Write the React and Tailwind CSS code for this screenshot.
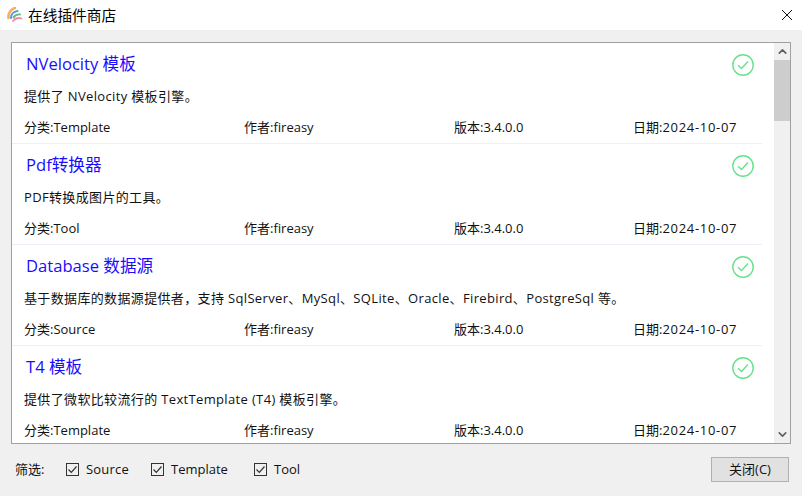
import { ChevronUp, ChevronDown } from 'lucide-react';

const plugins = [
  { name: 'NVelocity 模板', desc: '提供了 NVelocity 模板引擎。', category: 'Template' },
  { name: 'Pdf转换器', desc: 'PDF转换成图片的工具。', category: 'Tool' },
  { name: 'Database 数据源', desc: '基于数据库的数据源提供者，支持 SqlServer、MySql、SQLite、Oracle、Firebird、PostgreSql 等。', category: 'Source' },
  { name: 'T4 模板', desc: '提供了微软比较流行的 TextTemplate (T4) 模板引擎。', category: 'Template' },
];

function Logo() {
  return (
    <svg width="16" height="16" viewBox="0 0 16 16" fill="none">
      <path d="M1.500 11C1 6 4 2 8 1" stroke="#f7b05c" strokeWidth="2.600" strokeLinecap="round" />
      <path d="M4 11C4 7.500 6.500 4.500 10.500 4" stroke="#5a9ae0" strokeWidth="2.200" strokeLinecap="round" />
      <path d="M6.500 10.500C7.500 8.500 10 7.300 13 7.500" stroke="#5dbb78" strokeWidth="1.800" strokeLinecap="round" />
      <path d="M6 14C8 11.500 11.500 10.500 14.500 11.500" stroke="#ee8ea0" strokeWidth="1.800" strokeLinecap="round" />
    </svg>
  );
}

function StatusIcon() {
  return (
    <svg width="22" height="22" viewBox="0 0 22 22" fill="none" className="mt-[2px]">
      <circle cx="11" cy="11" r="10.200" stroke="#66e38a" strokeWidth="1.400" />
      <path d="M6 11.300L9.500 14.500L16 7.500" stroke="#66e38a" strokeWidth="1.400" />
    </svg>
  );
}

function CheckMark() {
  return (
    <svg width="11" height="11" viewBox="0 0 11 11" fill="none">
      <path d="M1.500 5.500L4.300 8.300L9.500 2.500" stroke="#333333" strokeWidth="1.200" />
    </svg>
  );
}

function PluginRow({ plugin }) {
  return (
    <div className="h-[101px] shrink-0 border-b border-[#eeeefa] pl-3 pr-2 flex flex-col">
      <div className="flex justify-between h-[44px] pt-[9px] pl-[2px]">
        <span className="text-[16.6px] leading-[24px] text-[#1a0dff]">{plugin.name}</span>
        <StatusIcon />
      </div>
      <div className="text-[13px] leading-[18px] h-[31px] tracking-[0.35px] text-[#111111]">{plugin.desc}</div>
      <div className="grid grid-cols-[220px_210px_179px_1fr] text-[13px] leading-[18px] text-[#111111]">
        <span>分类:{plugin.category}</span>
        <span>作者:fireasy</span>
        <span>版本:3.4.0.0</span>
        <span>日期:<span className="tracking-[0.7px]">2024-10-07</span></span>
      </div>
    </div>
  );
}

function Filter({ label, className }) {
  return (
    <label className={`flex items-center gap-[7px] ${className}`}>
      <span className="w-[13px] h-[13px] border border-[#333333] flex items-center justify-center">
        <CheckMark />
      </span>
      <span>{label}</span>
    </label>
  );
}

export default function App() {
  return (
    <div className="w-[802px] h-[496px] flex flex-col bg-[#f0f0f0] overflow-hidden text-[#111111] font-['Open_Sans','Noto_Sans_CJK_SC',sans-serif]">
      {/* Title bar */}
      <div className="h-[30px] shrink-0 bg-white flex items-center pl-[7px] pr-[10px]">
        <Logo />
        <span className="ml-[5px] text-[14.7px] text-black">在线插件商店</span>
        <svg width="10" height="10" viewBox="0 0 10 10" className="ml-auto">
          <path d="M0 0L10 10M10 0L0 10" stroke="#111111" strokeWidth="1" />
        </svg>
      </div>

      {/* List */}
      <div className="mt-3 mx-[11px] h-[402px] shrink-0 border border-[#a0a0a0] bg-white flex overflow-hidden">
        <div className="w-[750px] shrink-0 flex flex-col overflow-hidden">
          {plugins.map((plugin) => (
            <PluginRow key={plugin.name} plugin={plugin} />
          ))}
        </div>
        <div className="w-[16px] ml-auto bg-[#f0f0f0] flex flex-col items-center">
          <ChevronUp size={13} strokeWidth={3} className="h-[17px] text-[#606060]" />
          <div className="w-full h-[61px] bg-[#cdcdcd]" />
          <ChevronDown size={13} strokeWidth={3} className="h-[17px] mt-auto text-[#606060]" />
        </div>
      </div>

      {/* Footer */}
      <div className="flex items-center flex-1 pl-[15px] pr-[13px] text-[13px] pb-px">
        <span className="w-[51px] shrink-0">筛选:</span>
        <Filter label="Source" className="w-[85px] tracking-[0.2px]" />
        <Filter label="Template" className="w-[103px]" />
        <Filter label="Tool" />
        <button className="ml-auto w-[78px] h-[25px] border border-[#b0b0b0] bg-[#e1e1e1] text-[13px]">关闭(C)</button>
      </div>
    </div>
  );
}
